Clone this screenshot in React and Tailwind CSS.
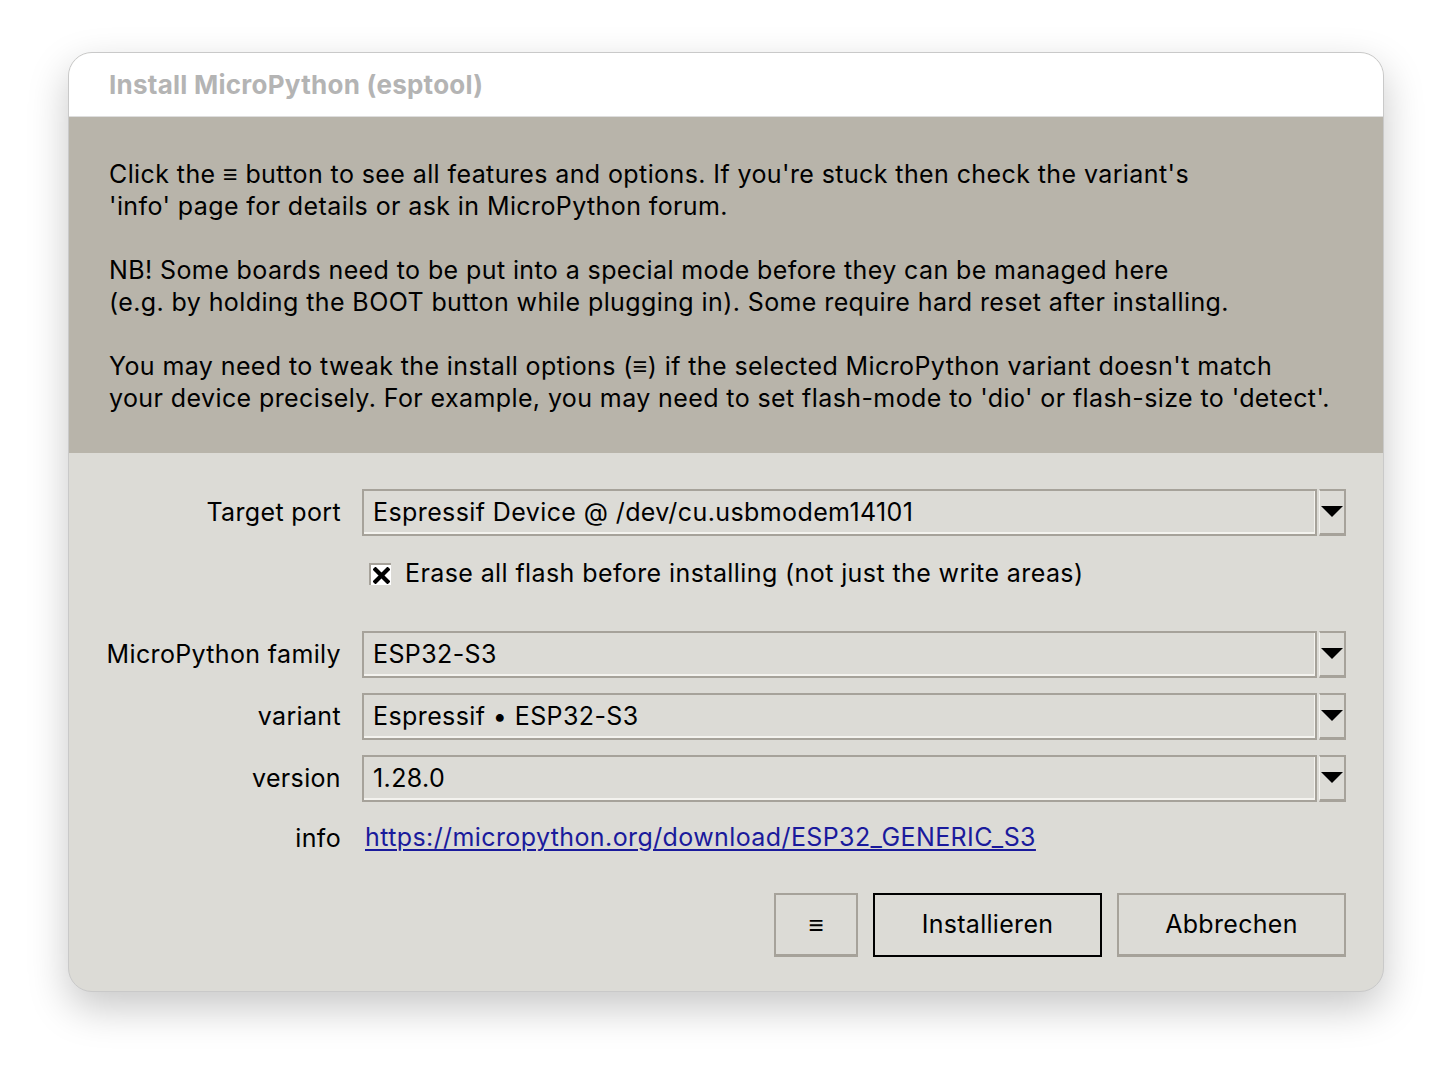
import React from 'react';

const font = { fontFamily: 'Inter, "Noto Sans", sans-serif' };

const Arrow = () => (
    <svg width="22" height="12" viewBox="0 0 22 12">
        <polygon points="0,0 22,0 11,11" fill="#000" />
    </svg>
);

const Combo = ({ value }) => (
    <div className="flex h-[47px] gap-[2px]">
        <div className="flex-1 flex items-center pl-[9px] border-2 border-[#a6a29a] shadow-[inset_-1px_-2px_0_#f4f3ef] text-[25px] tracking-[0.4px] text-black whitespace-nowrap">
            {value}
        </div>
        <div className="w-[27px] flex items-center justify-center border-t-2 border-l border-r-2 border-b-[3px] border-t-[#a6a29a] border-l-[#f4f3ef] border-r-[#a6a29a] border-b-[#a6a29a]">
            <Arrow />
        </div>
    </div>
);

const Label = ({ children }) => (
    <div className="flex justify-end text-[25px] tracking-[0.35px] text-black leading-none whitespace-nowrap">
        <span>{children}</span>
    </div>
);

export default function App() {
    return (
        <div className="min-h-screen bg-white pl-[68px] pt-[52px]" style={font}>
            <div className="w-[1316px] h-[940px] rounded-[24px] border border-[#c9c9c9] overflow-hidden shadow-[0_16px_40px_rgba(0,0,0,0.22)] flex flex-col bg-[#dcdbd6]">
                <div className="h-[64px] bg-white border-b border-[#dedede] flex items-center pl-[40px]">
                    <span className="text-[26px] font-bold tracking-[0.25px] text-[#b4b4b4]">Install MicroPython (esptool)</span>
                </div>

                <div className="bg-[#b8b4aa] h-[336px] pt-[41px] px-[40px] text-[25px] leading-[32px] text-black tracking-[0.4px]">
                    <p>Click the ≡ button to see all features and options. If you're stuck then check the variant's<br />'info' page for details or ask in MicroPython forum.</p>
                    <p className="mt-[32px]">NB! Some boards need to be put into a special mode before they can be managed here<br />(e.g. by holding the BOOT button while plugging in). Some require hard reset after installing.</p>
                    <p className="mt-[32px]">You may need to tweak the install options (≡) if the selected MicroPython variant doesn't match<br />your device precisely. For example, you may need to set flash-mode to 'dio' or flash-size to 'detect'.</p>
                </div>

                <div className="flex-1 pl-[40px] pr-[37px] pt-[36px]">
                    <div className="grid grid-cols-[232px_1fr] gap-x-[21px] items-center">
                        <Label>Target port</Label>
                        <Combo value="Espressif Device @ /dev/cu.usbmodem14101" />

                        <div />
                        <div className="flex items-center h-[38px] mt-[19px] pl-[7px]">
                            <div className="w-[22px] h-[22px] bg-white border-l-2 border-t-2 border-[#a6a29a] flex items-center justify-center">
                                <svg width="17" height="17" viewBox="0 0 17 17">
                                    <path d="M2.5 2.5 L14.5 14.5 M14.5 2.5 L2.5 14.5" stroke="#000" strokeWidth="4.2" strokeLinecap="square" />
                                </svg>
                            </div>
                            <span className="ml-[14px] text-[25px] tracking-[0.4px] text-black whitespace-nowrap">Erase all flash before installing (not just the write areas)</span>
                        </div>

                        <div className="mt-[38px]"><Label>MicroPython family</Label></div>
                        <div className="mt-[38px]"><Combo value="ESP32-S3" /></div>

                        <div className="mt-[15px]"><Label>variant</Label></div>
                        <div className="mt-[15px]"><Combo value="Espressif • ESP32-S3" /></div>

                        <div className="mt-[15px]"><Label>version</Label></div>
                        <div className="mt-[15px]"><Combo value="1.28.0" /></div>

                        <div className="mt-[19px]"><Label>info</Label></div>
                        <div className="mt-[19px] h-[34px] flex items-center pl-[3px]">
                            <span className="text-[25px] tracking-[0.4px] text-[#1a1a9c] underline underline-offset-[3px] decoration-[1.5px] whitespace-nowrap">https://micropython.org/download/ESP32_GENERIC_S3</span>
                        </div>
                    </div>

                    <div className="flex justify-end gap-[15px] mt-[38px]">
                        <button className="w-[84px] h-[64px] border-2 border-[#a6a29a] border-b-[3px] text-[26px] font-semibold text-black">≡</button>
                        <button className="w-[229px] h-[64px] border-2 border-black text-[25px] tracking-[0.3px] text-black">Installieren</button>
                        <button className="w-[229px] h-[64px] border-2 border-[#a6a29a] border-b-[3px] text-[25px] tracking-[0.3px] text-black">Abbrechen</button>
                    </div>
                </div>
            </div>
        </div>
    );
}
